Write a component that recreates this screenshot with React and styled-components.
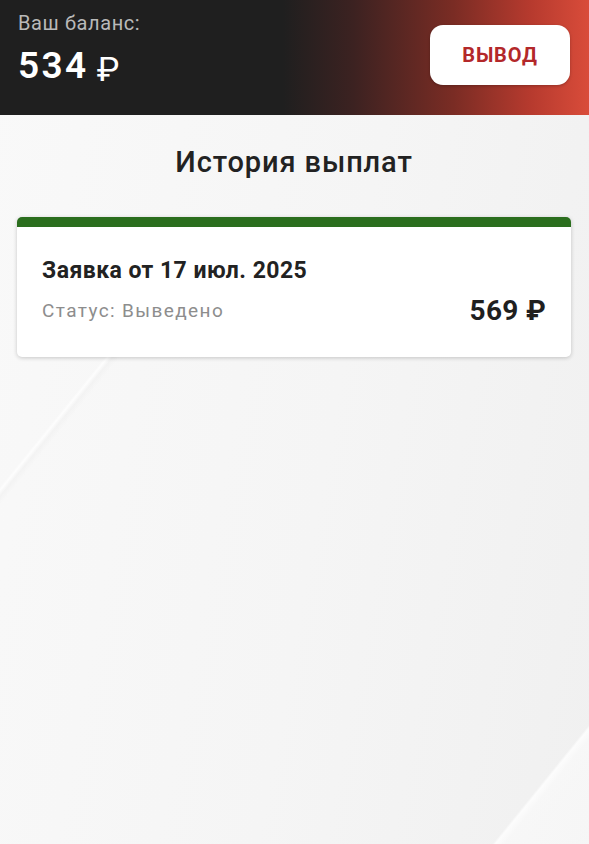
import styled, { createGlobalStyle } from 'styled-components'

const GlobalStyle = createGlobalStyle`
  html, body {
    margin: 0;
    padding: 0;
  }
  body {
    font-family: Roboto, "Noto Sans", "Liberation Sans", sans-serif;
    background: #f4f4f4;
  }
`

// faint diagonal light streaks only in the lower part of the page
const Page = styled.div`
  min-height: 844px;
  background-color: #f5f5f5;
  background-image:
    linear-gradient(129deg, transparent 0 11.9%, rgba(255,255,255,0.75) 12.2%, rgba(236,236,236,0.4) 12.7%, transparent 13.4%),
    linear-gradient(129deg, transparent 0 90.3%, rgba(255,255,255,0.8) 90.6%, rgba(250,250,250,0.7) 91.5%, rgba(248,248,248,0.7) 100%),
    linear-gradient(100deg, #f9f9f9 0%, #f5f5f5 55%, #f0f0f0 100%);
  background-size: 100% 504px, 100% 504px, 100% 100%;
  background-position: 0 340px, 0 340px, 0 0;
  background-repeat: no-repeat;
`

const Header = styled.header`
  height: 115px;
  box-sizing: border-box;
  padding: 0 19px 0 18px;
  display: flex;
  align-items: flex-start;
  justify-content: space-between;
  background: linear-gradient(90deg, #1f1f1f 0%, #1f1f1f 48%, #3c2221 60%, #7a2c24 77%, #b63a2e 90%, #d94c3a 100%);
`

const Balance = styled.div`
  display: flex;
  flex-direction: column;
  padding-top: 10px;
`

const BalanceLabel = styled.span`
  font-size: 20px;
  letter-spacing: 0.6px;
  color: #b9b9b9;
  line-height: 26px;
`

const BalanceValue = styled.span`
  display: flex;
  align-items: baseline;
  font-size: 37px;
  font-weight: 600;
  letter-spacing: 2.4px;
  color: #ffffff;
  line-height: 44px;
  margin-top: 8px;

  small {
    font-size: 34px;
    font-weight: 400;
    letter-spacing: 0;
    margin-left: 8px;
    position: relative;
    top: 3px;
  }
`

const WithdrawButton = styled.button`
  width: 140px;
  height: 60px;
  margin-top: 25px;
  border: none;
  border-radius: 13px;
  background: #ffffff;
  color: #b3282a;
  font-family: inherit;
  font-size: 20px;
  font-weight: 700;
  letter-spacing: 0.8px;
  cursor: pointer;
  box-shadow: 0 1px 3px rgba(0,0,0,0.25);
`

const Content = styled.main`
  padding: 0 18px 0 17px;
`

const Title = styled.h1`
  margin: 30px 0 38px;
  text-align: center;
  font-size: 29px;
  font-weight: 500;
  letter-spacing: 0.9px;
  color: #222222;
`

const Card = styled.div`
  background: #ffffff;
  border-radius: 5px;
  border-top: 10px solid ${props => props.accent};
  box-shadow: 0 1px 4px rgba(0,0,0,0.2);
  padding: 30px 25px 30px;
`

const CardTitle = styled.div`
  font-size: 23px;
  font-weight: 700;
  letter-spacing: 0.45px;
  color: #222222;
`

const CardRow = styled.div`
  display: flex;
  justify-content: space-between;
  align-items: center;
  margin-top: 10px;
`

const Status = styled.span`
  font-size: 19px;
  letter-spacing: 1.4px;
  color: #8d8d8d;
`

const Amount = styled.span`
  font-size: 28px;
  font-weight: 700;
  letter-spacing: 0.3px;
  color: #1f1f1f;
`

export default function App() {
  return (
    <>
      <GlobalStyle />
      <Page>
        <Header>
          <Balance>
            <BalanceLabel>Ваш баланс:</BalanceLabel>
            <BalanceValue>534<small>₽</small></BalanceValue>
          </Balance>
          <WithdrawButton>ВЫВОД</WithdrawButton>
        </Header>
        <Content>
          <Title>История выплат</Title>
          <Card accent="#2b6e1e">
            <CardTitle>Заявка от 17 июл. 2025</CardTitle>
            <CardRow>
              <Status>Статус: Выведено</Status>
              <Amount>569 ₽</Amount>
            </CardRow>
          </Card>
        </Content>
      </Page>
    </>
  )
}
